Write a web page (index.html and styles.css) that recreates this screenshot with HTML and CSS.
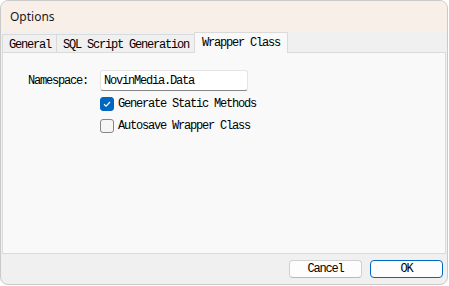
FILE: index.html
```html
<!DOCTYPE html>
<html lang="en">
<head>
    <meta charset="UTF-8">
    <title>Options</title>
    <link rel="stylesheet" href="styles.css">
</head>
<body>
    <div class="dialog">
        <div class="titlebar">Options</div>

        <div class="tabs">
            <div class="tab">General</div>
            <div class="tab">SQL Script Generation</div>
            <div class="tab active">Wrapper Class</div>
        </div>

        <div class="panel">
            <div class="form">
                <label class="label" for="ns">Namespace:</label>
                <input class="textbox" type="text" id="ns" value="NovinMedia.Data">

                <div class="check first">
                    <span class="box checked">
                        <svg width="10" height="10" viewBox="0 0 10 10">
                            <path d="M2 5.2 L4.1 7.2 L8 3" fill="none" stroke="#fff" stroke-width="1.2"/>
                        </svg>
                    </span>
                    <span>Generate Static Methods</span>
                </div>
                <div class="check">
                    <span class="box"></span>
                    <span>Autosave Wrapper Class</span>
                </div>
            </div>
        </div>

        <div class="footer">
            <button class="btn">Cancel</button>
            <button class="btn default">OK</button>
        </div>
    </div>
</body>
</html>
```

FILE: styles.css
```css
body {
    margin: 0;
    padding: 0;
    background: #ffffff;
    font-family: "Liberation Mono", monospace;
    font-size: 12px;
    letter-spacing: -1.2px;
    color: #000;
}

.dialog {
    width: 446px;
    height: 283px;
    border: 1px solid #c9c9c9;
    border-radius: 8px;
    overflow: hidden;
    display: flex;
    flex-direction: column;
    background: #f0f0f0;
}

.titlebar {
    height: 31px;
    flex: none;
    display: flex;
    align-items: center;
    padding-left: 9px;
    background: #f8efe9;
    font-family: "Noto Sans", sans-serif;
    font-size: 12px;
    letter-spacing: 0;
    color: #1a1a1a;
}

.tabs {
    height: 20px;
    flex: none;
    display: flex;
    align-items: flex-end;
    padding-left: 1px;
}

.tab {
    height: 18px;
    box-sizing: border-box;
    border: 1px solid #dadada;
    border-bottom: none;
    padding: 2px 5px 0 6px;
    display: flex;
    align-items: center;
    margin-right: -1px;
    background: #f0f0f0;
}

.tab.active {
    height: 21px;
    margin-bottom: -1px;
    padding: 0 7px 1px 7px;
    background: #f9f9f9;
    position: relative;
    z-index: 1;
}

.panel {
    flex: 1;
    margin: 0 1px;
    border: 1px solid #dadada;
    background: #f9f9f9;
}

.form {
    display: grid;
    grid-template-columns: 72px 148px;
    padding: 17px 0 0 25px;
}

.label {
    padding-top: 4px;
}

.textbox {
    grid-column: 2;
    width: 148px;
    height: 21px;
    box-sizing: border-box;
    margin: 0;
    border: 1px solid #e5e5e5;
    border-bottom-color: #868686;
    border-radius: 3px;
    background: #fff;
    padding: 0 0 0 3px;
    font: inherit;
    letter-spacing: -1.2px;
    outline: none;
}

.check {
    grid-column: 2;
    display: flex;
    align-items: center;
    gap: 4px;
    height: 14px;
    margin-top: 8px;
    white-space: nowrap;
}

.check.first {
    margin-top: 6px;
}

.box {
    width: 14px;
    height: 14px;
    box-sizing: border-box;
    border: 1px solid #858585;
    border-radius: 3px;
    background: #f5f5f5;
    display: flex;
    align-items: center;
    justify-content: center;
    flex: none;
}

.box.checked {
    background: #0067c0;
    border-color: #0067c0;
}

.footer {
    height: 30px;
    flex: none;
    display: flex;
    align-items: center;
    justify-content: flex-end;
    gap: 8px;
    padding-right: 4px;
}

.btn {
    width: 73px;
    height: 18px;
    box-sizing: border-box;
    border: 1px solid #d0d0d0;
    border-bottom-color: #b8b8b8;
    border-radius: 4px;
    background: #fdfdfd;
    font: inherit;
    letter-spacing: -1.2px;
    padding: 0;
    color: #000;
}

.btn.default {
    border: 1px solid #0067c0;
}
```
